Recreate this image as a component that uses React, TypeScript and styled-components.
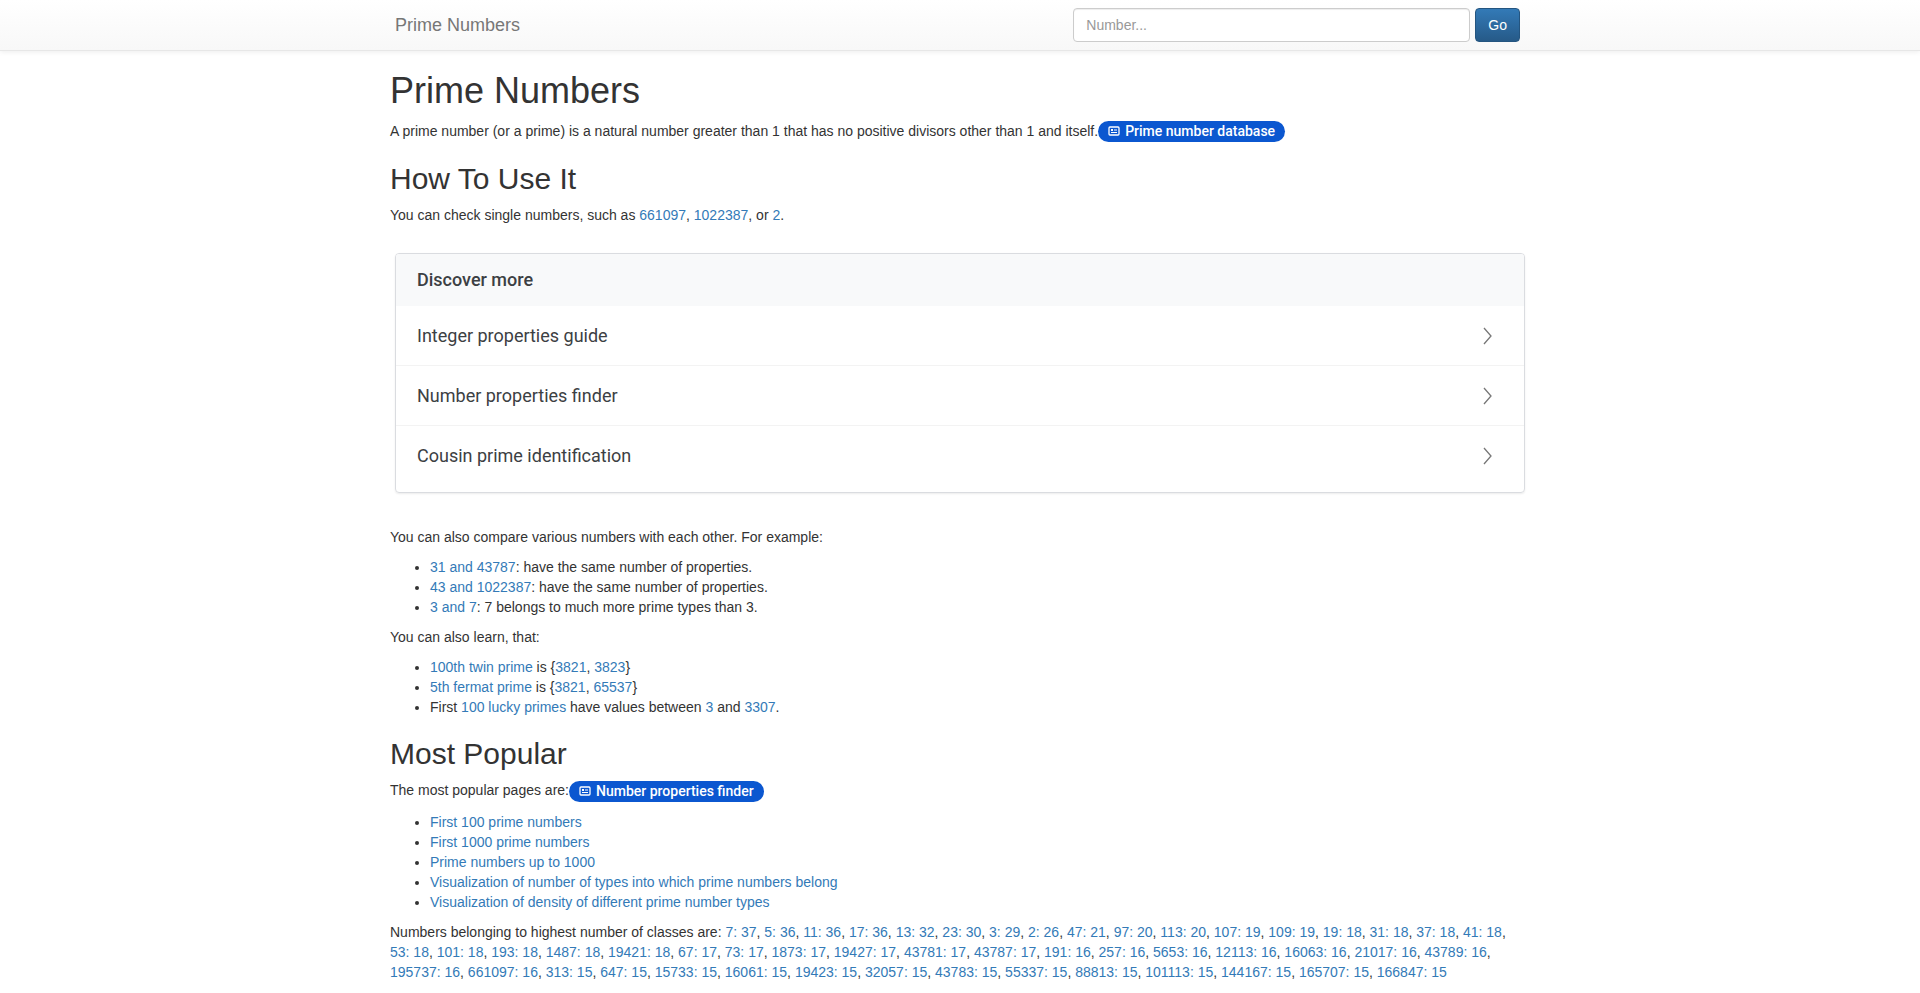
import React from "react";
import styled, { createGlobalStyle } from "styled-components";

const Global = createGlobalStyle`
  body { margin: 0; font-family: "Liberation Sans", Arial, sans-serif; font-size: 14px; line-height: 20px; color: #333; background: #fff; }
  a { color: #337ab7; text-decoration: none; }
  * { box-sizing: border-box; }
`;

const Navbar = styled.div`
  height: 51px; border-bottom: 1px solid #e7e7e7;
  background: linear-gradient(to bottom, #fff 0%, #f8f8f8 100%);
  box-shadow: inset 0 1px 0 rgba(255,255,255,.15), 0 1px 5px rgba(0,0,0,.075);
`;
const NavInner = styled.div`
  width: 1170px; margin: 0 auto; padding: 0 15px; height: 50px;
  display: flex; align-items: center; justify-content: space-between;
`;
const Brand = styled.span` font-size: 18px; color: #777; padding-left: 5px; `;
const Form = styled.div` display: flex; gap: 5px; padding-right: 10px; `;
const Input = styled.input`
  width: 397px; height: 34px; border: 1px solid #ccc; border-radius: 4px; padding: 6px 12px;
  font: 14px "Liberation Sans", Arial, sans-serif; box-shadow: inset 0 1px 1px rgba(0,0,0,.075);
  &::placeholder { color: #999; }
`;
const Go = styled.button`
  height: 34px; padding: 6px 12px; color: #fff; font: 14px "Liberation Sans", Arial, sans-serif;
  border: 1px solid #245580; border-radius: 4px; background: linear-gradient(#337ab7, #265a88);
`;
const Container = styled.div` width: 1170px; margin: 0 auto; padding: 0 15px 40px; `;
const H1 = styled.h1` font-size: 36px; font-weight: 500; line-height: 1.1; margin: 20px 0 10px; `;
const H2 = styled.h2` font-size: 30px; font-weight: 500; line-height: 1.1; margin: 20px 0 10px; `;
const P = styled.p` margin: 0 0 10px; `;
const Chip = styled.span`
  display: inline-flex; align-items: center; gap: 5px; background: #0b57d0; color: #fff;
  font: 500 14px Roboto, sans-serif; border-radius: 12px; padding: 1px 10px 2px 10px; vertical-align: middle; height: 21px;
`;
const Card = styled.div`
  margin: 28px 5px 34px; border: 1px solid #dadce0; border-radius: 4px; overflow: hidden;
  box-shadow: 0 1px 2px rgba(0,0,0,.08); font-family: Roboto, sans-serif;
`;
const CardHead = styled.div`
  height: 52px; background: #f8f9fa; padding: 0 21px; display: flex; align-items: center;
  font-size: 18px; font-weight: 500; color: #3c4043;
`;
const Row = styled.div`
  height: 60px; padding: 0 30px 0 21px; display: flex; align-items: center; justify-content: space-between;
  font-size: 18px; font-weight: 400; color: #3c4043; border-bottom: 1px solid #f3f3f3;
  &:last-child { border-bottom: none; height: 66px; padding-bottom: 6px; }
`;
const Ul = styled.ul` margin: 0 0 10px; padding-left: 40px; `;
const NumLink = styled.a` white-space: nowrap; `;

const ChipIcon = () => (
  <svg width="12" height="12" viewBox="0 0 12 12"><rect x="1" y="2" width="10" height="8" rx="1" fill="none" stroke="#fff" strokeWidth="1.3"/><rect x="3" y="4" width="2" height="2" fill="#fff"/><line x1="6" y1="5" x2="9" y2="5" stroke="#fff"/><line x1="3" y1="7.5" x2="9" y2="7.5" stroke="#fff"/></svg>
);
const Chev = () => (
  <svg width="12" height="20" viewBox="0 0 12 20"><path d="M2 2l7 8-7 8" fill="none" stroke="#777" strokeWidth="1.3"/></svg>
);

const nums = "7: 37, 5: 36, 11: 36, 17: 36, 13: 32, 23: 30, 3: 29, 2: 26, 47: 21, 97: 20, 113: 20, 107: 19, 109: 19, 19: 18, 31: 18, 37: 18, 41: 18, 53: 18, 101: 18, 193: 18, 1487: 18, 19421: 18, 67: 17, 73: 17, 1873: 17, 19427: 17, 43781: 17, 43787: 17, 191: 16, 257: 16, 5653: 16, 12113: 16, 16063: 16, 21017: 16, 43789: 16, 195737: 16, 661097: 16, 313: 15, 647: 15, 15733: 15, 16061: 15, 19423: 15, 32057: 15, 43783: 15, 55337: 15, 88813: 15, 101113: 15, 144167: 15, 165707: 15, 166847: 15".split(", ");

export default function App() {
  return (
    <>
      <Global />
      <Navbar>
        <NavInner>
          <Brand>Prime Numbers</Brand>
          <Form><Input placeholder="Number..." /><Go>Go</Go></Form>
        </NavInner>
      </Navbar>
      <Container>
        <H1>Prime Numbers</H1>
        <P>A prime number (or a prime) is a natural number greater than 1 that has no positive divisors other than 1 and itself.<Chip><ChipIcon />Prime number database</Chip></P>
        <H2>How To Use It</H2>
        <P>You can check single numbers, such as <a href="#">661097</a>, <a href="#">1022387</a>, or <a href="#">2</a>.</P>
        <Card>
          <CardHead>Discover more</CardHead>
          {["Integer properties guide", "Number properties finder", "Cousin prime identification"].map(t => (
            <Row key={t}>{t}<Chev /></Row>
          ))}
        </Card>
        <P>You can also compare various numbers with each other. For example:</P>
        <Ul>
          <li><a href="#">31 and 43787</a>: have the same number of properties.</li>
          <li><a href="#">43 and 1022387</a>: have the same number of properties.</li>
          <li><a href="#">3 and 7</a>: 7 belongs to much more prime types than 3.</li>
        </Ul>
        <P>You can also learn, that:</P>
        <Ul>
          <li><a href="#">100th twin prime</a> is {"{"}<a href="#">3821</a>, <a href="#">3823</a>{"}"}</li>
          <li><a href="#">5th fermat prime</a> is {"{"}<a href="#">3821</a>, <a href="#">65537</a>{"}"}</li>
          <li>First <a href="#">100 lucky primes</a> have values between <a href="#">3</a> and <a href="#">3307</a>.</li>
        </Ul>
        <H2>Most Popular</H2>
        <P>The most popular pages are:<Chip><ChipIcon />Number properties finder</Chip></P>
        <Ul>
          <li><a href="#">First 100 prime numbers</a></li>
          <li><a href="#">First 1000 prime numbers</a></li>
          <li><a href="#">Prime numbers up to 1000</a></li>
          <li><a href="#">Visualization of number of types into which prime numbers belong</a></li>
          <li><a href="#">Visualization of density of different prime number types</a></li>
        </Ul>
        <P>Numbers belonging to highest number of classes are: {nums.map((n, i) => (
          <React.Fragment key={i}><NumLink href="#">{n}</NumLink>{i < nums.length - 1 ? ", " : ""}</React.Fragment>
        ))}</P>
      </Container>
    </>
  );
}
